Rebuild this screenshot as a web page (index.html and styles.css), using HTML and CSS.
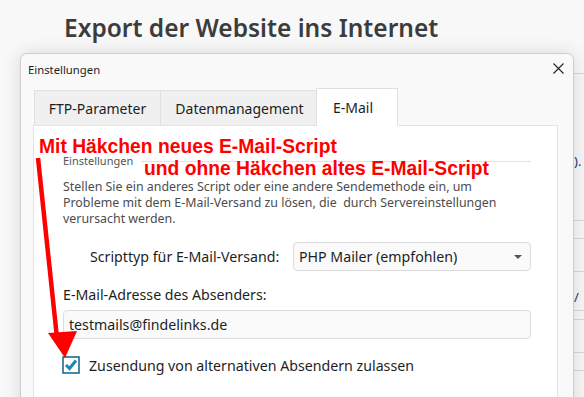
FILE: index.html
```html
<!DOCTYPE html>
<html lang="de">
    <head>
        <meta charset="UTF-8" />
        <meta name="viewport" content="width=device-width, initial-scale=1.0" />
        <title>Export der Website ins Internet</title>
        <link rel="stylesheet" href="styles.css">
    </head>
    <body>
        <div class="page">
            <h1>Export der Website ins Internet</h1>

            <div class="dialog">
                <div class="titlebar">
                    <span>Einstellungen</span>
                    <svg class="close" width="11" height="11" viewBox="0 0 11 11">
                        <path d="M0.5 0.5 L10.5 10.5 M10.5 0.5 L0.5 10.5" stroke="#222" stroke-width="1.1" fill="none" />
                    </svg>
                </div>
                <div class="dialog-body">
                    <div class="tabs">
                        <div class="tab tab-ftp">FTP-Parameter</div>
                        <div class="tab tab-data">Datenmanagement</div>
                        <div class="tab tab-mail active">E-Mail</div>
                    </div>
                    <div class="panel">
                        <div class="group-head">
                            <span>Einstellungen</span>
                            <div class="group-line"></div>
                        </div>
                        <p class="desc">
                            Stellen Sie ein anderes Script oder eine andere Sendemethode ein, um<br>
                            Probleme mit dem E-Mail-Versand zu lösen, die&nbsp; durch Servereinstellungen<br>
                            verursacht werden.
                        </p>
                        <div class="row">
                            <label for="scripttyp">Scripttyp für E-Mail-Versand:</label>
                            <div class="select" id="scripttyp">
                                <span>PHP Mailer (empfohlen)</span>
                                <span class="caret"></span>
                            </div>
                        </div>
                        <label class="field-label" for="sender">E-Mail-Adresse des Absenders:</label>
                        <div class="input" id="sender">testmails@findelinks.de</div>
                        <div class="check-row">
                            <svg class="check" width="18" height="18" viewBox="0 0 18 18">
                                <rect x="1" y="1" width="16" height="16" fill="#fff" stroke="#1d6b8e" stroke-width="1.6" />
                                <path d="M4 9 L7.5 12.5 L14 4.5" stroke="#1f85b2" stroke-width="3" fill="none" />
                            </svg>
                            <span>Zusendung von alternativen Absendern zulassen</span>
                        </div>
                    </div>
                </div>
            </div>
        </div>

        <div class="side">
            <div class="side-row tall"><span>).</span></div>
            <div class="side-row"></div>
            <div class="side-row mid"></div>
            <div class="side-row mid2"><span>/</span></div>
            <div class="side-row small"></div>
            <div class="side-row mid"></div>
            <div class="side-row"></div>
        </div>

        <!-- rote Anmerkungen über dem Dialog -->
        <div class="note note-1">Mit Häkchen neues E-Mail-Script</div>
        <div class="note note-2">und ohne Häkchen altes E-Mail-Script</div>
        <svg class="arrow" width="100" height="380" viewBox="0 0 100 380">
            <path d="M38 158 L57 338" stroke="#f00" stroke-width="4.5" fill="none" />
            <path d="M48 333 L77 331 L65 358 Z" fill="#f00" />
        </svg>
    </body>
</html>
```

FILE: styles.css
```css
html,
body {
    height: 100%;
}
body {
    margin: 0;
    display: flex;
    background-color: #f8f8f8;
    font-family: "Noto Sans", "Open Sans", sans-serif;
    color: #1e1e1e;
    overflow: hidden;
    position: relative;
}
.page {
    width: 574px;
    flex-shrink: 0;
}
h1 {
    margin: 0;
    padding: 11px 0 0 64px;
    height: 53px;
    box-sizing: border-box;
    font-size: 24.5px;
    line-height: 34px;
    font-weight: 600;
    color: #3c3c3c;
}
.dialog {
    margin-left: 20px;
    height: 360px;
    background-color: #f9f9f9;
    border: 1px solid #cdcdcd;
    border-radius: 7px 7px 0 0;
    box-shadow: 0 0 18px rgba(0, 0, 0, 0.13);
    position: relative;
    z-index: 2;
}
.titlebar {
    height: 30px;
    display: flex;
    align-items: center;
    justify-content: space-between;
    padding: 0 9px 0 7px;
    font-size: 11.3px;
}
.close {
    margin-top: -2px;
}
.dialog-body {
    padding: 4px 15px 0 12px;
}
.tabs {
    display: flex;
    align-items: flex-end;
    margin-left: 2px;
    height: 37px;
}
.tab {
    height: 35px;
    box-sizing: border-box;
    display: flex;
    align-items: center;
    justify-content: center;
    font-size: 14px;
    background-color: #f0f0f0;
    border: 1px solid #e0e0e0;
    border-bottom: none;
    margin-left: -1px;
}
.tab-ftp {
    width: 127px;
}
.tab-data {
    width: 159px;
}
.tab-mail {
    width: 82px;
    justify-content: flex-start;
    padding-left: 16px;
    margin-left: -3px;
}
.tab.active {
    height: 38px;
    background-color: #fff;
    margin-bottom: -1px;
    position: relative;
    z-index: 1;
}
.panel {
    background-color: #fff;
    border: 1px solid #e3e3e3;
    height: 300px;
    padding: 28px 26px 0 29px;
}
.group-head {
    display: flex;
    align-items: center;
    font-size: 11px;
    line-height: 14px;
    color: #555;
}
.group-line {
    flex: 1;
    height: 1px;
    margin-left: 8px;
    background-color: #e3e3e3;
}
.desc {
    margin: 11px 0 0;
    font-size: 12.4px;
    line-height: 16px;
    color: #4c4c4c;
}
.row {
    display: flex;
    align-items: center;
    margin-top: 15px;
}
.row label {
    width: 230px;
    box-sizing: border-box;
    padding-left: 27px;
    font-size: 14.2px;
}
.select,
.input {
    height: 29px;
    box-sizing: border-box;
    border: 1px solid #dcdcdc;
    border-radius: 4px;
    background-color: #fafafa;
    display: flex;
    align-items: center;
    font-size: 14.2px;
}
.select {
    flex: 1;
    justify-content: space-between;
    padding: 0 8px 0 5px;
}
.caret {
    width: 0;
    height: 0;
    border-left: 4px solid transparent;
    border-right: 4px solid transparent;
    border-top: 4px solid #555;
}
.field-label {
    display: block;
    margin-top: 14px;
    font-size: 14.2px;
    line-height: 20px;
}
.input {
    margin-top: 5px;
    padding-left: 5px;
}
.check-row {
    display: flex;
    align-items: center;
    margin-top: 16px;
    height: 20px;
    font-size: 14.2px;
}
.check {
    margin: 0 9px 0 -1px;
}
.side {
    flex: 1;
    margin-top: 73px;
    border-top: 1px solid #d8d8d8;
    background-color: #f7f7f7;
    font-size: 13px;
    color: #1d3a6e;
}
.side-row {
    border-bottom: 1px solid #d8d8d8;
    height: 17px;
}
.side-row.tall {
    height: 147px;
    padding-top: 78px;
    box-sizing: border-box;
}
.side-row.mid {
    height: 32px;
}
.side-row.mid2 {
    height: 39px;
    padding-top: 16px;
    box-sizing: border-box;
}
.side-row.small {
    height: 8px;
}
.note {
    position: absolute;
    z-index: 5;
    font-family: "Liberation Sans", Arial, sans-serif;
    font-weight: bold;
    font-size: 19.3px;
    line-height: 22px;
    color: #f00;
    white-space: nowrap;
}
.note-1 {
    left: 39px;
    top: 136px;
}
.note-2 {
    left: 144px;
    top: 158px;
}
.arrow {
    position: absolute;
    left: 0;
    top: 0;
    z-index: 6;
}
```
